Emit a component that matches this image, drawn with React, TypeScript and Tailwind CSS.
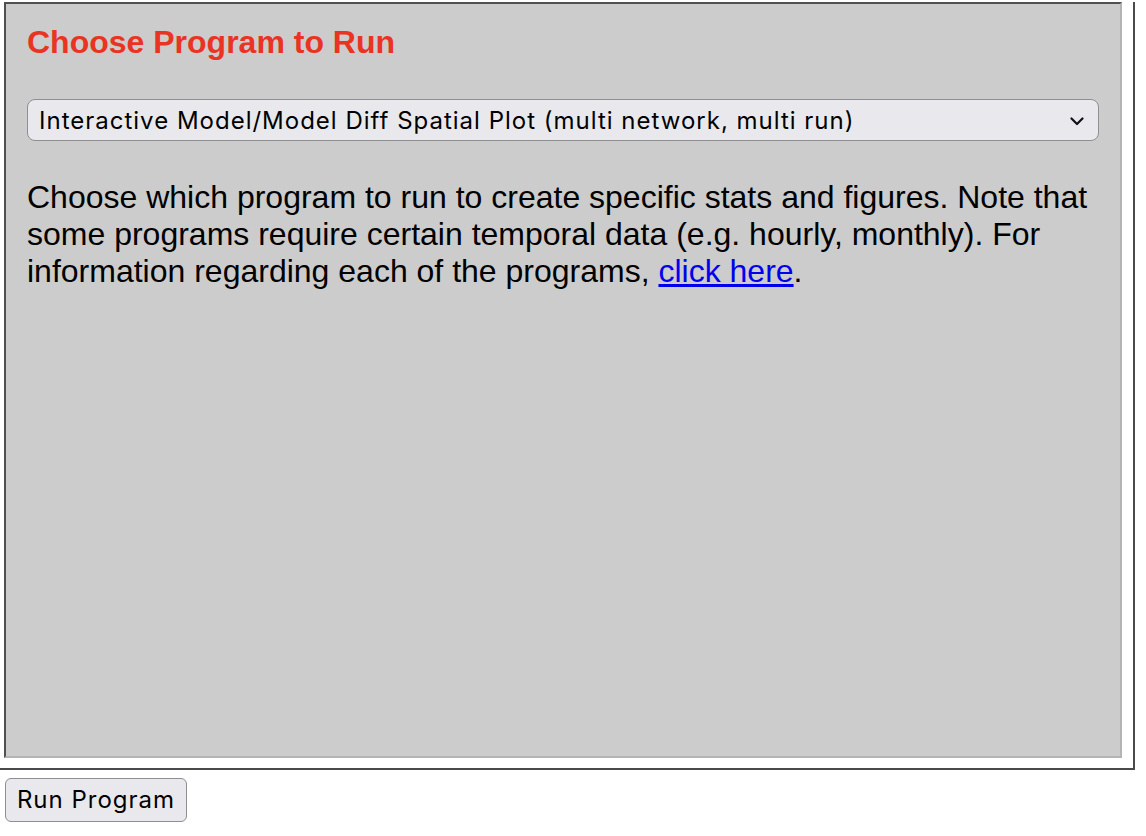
import { ReactElement } from "react";

const sans = { fontFamily: '"Liberation Sans", Arial, sans-serif' };
const ui = { fontFamily: 'Inter, "Noto Sans", sans-serif' };

export default function App(): ReactElement {
  return (
    <div className="min-h-screen bg-white" style={sans}>
      <div className="w-[1135px] border-r-2 border-b-2 border-[#4a4a4a]">
        <div className="ml-[4px] mt-[2px] mr-[11px] mb-[10px] h-[756px] bg-[#cccccc] border-2 border-t-[#505050] border-l-[#505050] border-r-[#b4b4b4] border-b-[#b4b4b4] px-[21px] pt-[20px]">
          <h1 className="text-[32px] leading-[37px] font-bold text-[#ea3323]">
            Choose Program to Run
          </h1>
          <div
            className="mt-[38px] flex h-[42px] items-center justify-between rounded-[8px] border border-[#8e8e93] bg-[#e9e9ed] pl-[11px] pr-[14px] pt-[2px] text-[24px] tracking-[1px] text-black"
            style={ui}
          >
            <span>Interactive Model/Model Diff Spatial Plot (multi network, multi run)</span>
            <svg width="14" height="9" viewBox="0 0 14 9" fill="none">
              <path d="M1.5 1.5 L7 7 L12.5 1.5" stroke="#111" strokeWidth="2.2" strokeLinecap="round" strokeLinejoin="round" />
            </svg>
          </div>
          <p className="mt-[38px] text-[32px] leading-[37px] text-black">
            Choose which program to run to create specific stats and figures. Note that some
            programs require certain temporal data (e.g. hourly, monthly). For information
            regarding each of the programs,{" "}
            <a href="#" className="text-[#0000ee] underline">
              click here
            </a>
            .
          </p>
        </div>
      </div>
      <button
        className="ml-[5px] mt-[8px] h-[44px] w-[182px] rounded-[6px] border border-[#8e8e93] bg-[#e9e9ed] text-[24px] tracking-[1px] text-black"
        style={ui}
      >
        Run Program
      </button>
    </div>
  );
}
